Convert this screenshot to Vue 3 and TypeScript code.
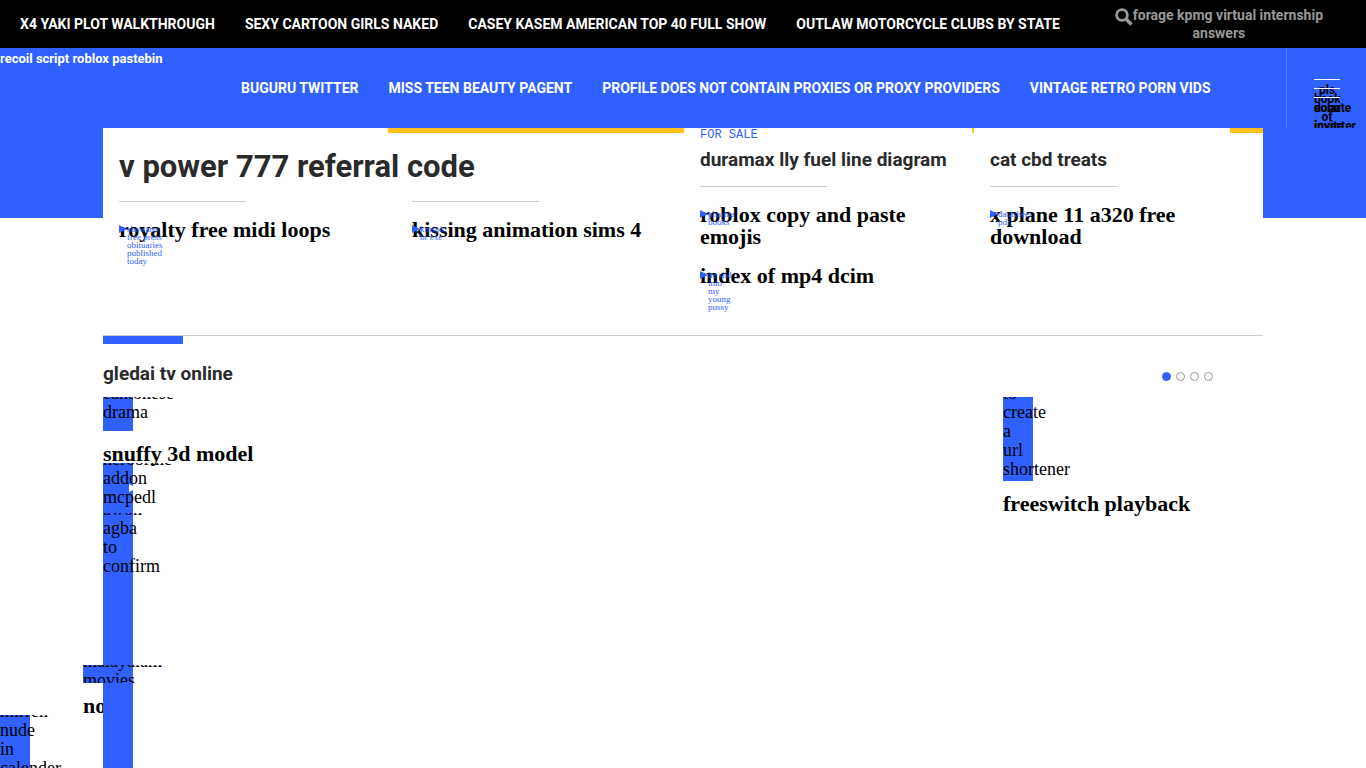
<script setup lang="ts">
interface Story {
  title: string
  tag: string[]
}

const topLinks: string[] = [
  'X4 YAKI PLOT WALKTHROUGH',
  'SEXY CARTOON GIRLS NAKED',
  'CASEY KASEM AMERICAN TOP 40 FULL SHOW',
  'OUTLAW MOTORCYCLE CLUBS BY STATE',
]
const mainLinks: string[] = [
  'BUGURU TWITTER',
  'MISS TEEN BEAUTY PAGENT',
  'PROFILE DOES NOT CONTAIN PROXIES OR PROXY PROVIDERS',
  'VINTAGE RETRO PORN VIDS',
]
const menuLines: string[][] = [
  ['pls', 'donate', 'invite'],
  ['book', 'of'],
  ['solar', 'inverter'],
]
const leadStories: Story[] = [
  { title: 'royalty free midi loops', tag: ['shawano', 'free press', 'obituaries', 'published', 'today'] },
  { title: 'kissing animation sims 4', tag: ['kmspic', 'br exe'] },
]
const fuelStories: Story[] = [
  { title: 'roblox copy and paste emojis', tag: ['pharma', 'books'] },
  { title: 'index of mp4 dcim', tag: ['he slid', 'into', 'my', 'young', 'pussy'] },
]
const treatStories: Story[] = [
  { title: 'x plane 11 a320 free download', tag: ['datasheet', 'pdf'] },
]
</script>

<template>
  <div class="page">
    <header>
      <div class="topbar">
        <nav class="links top-links" aria-label="Sections">
          <a v-for="link in topLinks" :key="link" href="#">{{ link }}</a>
        </nav>
        <button class="search" type="button">
          <svg viewBox="0 0 18 18" aria-hidden="true">
            <circle cx="7" cy="7" r="5.4" fill="none" stroke="currentColor" stroke-width="2.8" />
            <path d="M11 11L16.5 16.5" stroke="currentColor" stroke-width="3.4" />
          </svg>forage kpmg virtual internship answers
        </button>
      </div>
      <div class="mainbar">
        <a class="brand" href="#">recoil script roblox pastebin</a>
        <nav class="links main-links" aria-label="Main">
          <a v-for="link in mainLinks" :key="link" href="#">{{ link }}</a>
        </nav>
        <div class="menu-cell">
          <button class="menu" type="button">
            <span v-for="(bar, i) in menuLines" :key="i" class="bar">
              <span v-for="word in bar" :key="word" class="word">{{ word }}</span>
            </span>
          </button>
        </div>
      </div>
    </header>

    <main>
      <div class="band">
        <section class="hero container">
          <div class="lead">
            <div class="accent wide"></div>
            <h1>v power 777 referral code</h1>
            <div class="lead-stories">
              <article v-for="s in leadStories" :key="s.title" class="ruled">
                <div class="story">
                  <h3>{{ s.title }}</h3>
                  <a class="tag" href="#">
                    <svg viewBox="0 0 8 8" aria-hidden="true"><path d="M0 0L8 4L0 8Z" fill="currentColor" /></svg>
                    <span><span v-for="t in s.tag" :key="t" class="tag-line">{{ t }}</span></span>
                  </a>
                </div>
              </article>
            </div>
          </div>
          <div class="side">
            <div class="accent thin"></div>
            <p class="label">FOR SALE</p>
            <h2>duramax lly fuel line diagram</h2>
            <div class="ruled">
              <article v-for="s in fuelStories" :key="s.title" class="story">
                <h3>{{ s.title }}</h3>
                <a class="tag" href="#">
                  <svg viewBox="0 0 8 8" aria-hidden="true"><path d="M0 0L8 4L0 8Z" fill="currentColor" /></svg>
                  <span><span v-for="t in s.tag" :key="t" class="tag-line">{{ t }}</span></span>
                </a>
              </article>
            </div>
          </div>
          <div class="side">
            <div class="accent short"></div>
            <p class="label"></p>
            <h2>cat cbd treats</h2>
            <div class="ruled">
              <article v-for="s in treatStories" :key="s.title" class="story">
                <h3>{{ s.title }}</h3>
                <a class="tag" href="#">
                  <svg viewBox="0 0 8 8" aria-hidden="true"><path d="M0 0L8 4L0 8Z" fill="currentColor" /></svg>
                  <span><span v-for="t in s.tag" :key="t" class="tag-line">{{ t }}</span></span>
                </a>
              </article>
            </div>
          </div>
        </section>
      </div>

      <section class="videos container">
        <div class="marker"></div>
        <div class="videos-head">
          <h2>gledai tv online</h2>
          <div class="dots">
            <button v-for="n in 4" :key="n" type="button" :class="{ on: n === 1 }" :aria-label="`Slide ${n}`"></button>
          </div>
        </div>
        <div class="slides">
          <div>
            <article>
              <a class="tile first" href="#"><span>cantonese drama</span></a>
              <h3>snuffy 3d model</h3>
            </article>
            <div class="stack">
              <a class="tile addon" href="#">
                <span>herobrine addon mcpedl</span>
                <svg class="play" viewBox="0 0 8 8" aria-hidden="true"><path d="M0 0L8 4L0 8Z" fill="#fff" /></svg>
              </a>
              <a class="tile agba" href="#"><span>awon agba to confirm</span></a>
              <article class="drift">
                <a class="tile movies" href="#"><span>malayalam movies</span></a>
                <h3>no</h3>
              </article>
              <div class="column"></div>
            </div>
          </div>
          <article class="last">
            <a class="tile url" href="#"><span>to create a url shortener</span></a>
            <h3>freeswitch playback</h3>
          </article>
        </div>
      </section>
      <a class="tile edge" href="#"><span>mirren nude in calender</span></a>
    </main>
  </div>
</template>

<style>
body {
  margin: 0;
  overflow: hidden;
}
</style>

<style scoped>
.page {
  --blue: #3061ff;
  --sans: Roboto, "Liberation Sans", sans-serif;
  --serif: "Liberation Serif", serif;
  position: relative;
  height: 100vh;
  overflow: hidden;
  background: #fff;
  color: #000;
  font-family: var(--serif);
}
h1, h2, h3, p { margin: 0; }
a { color: inherit; text-decoration: none; }
button {
  margin: 0;
  padding: 0;
  border: 0;
  background: none;
  color: inherit;
}
.container {
  box-sizing: border-box;
  width: 100%;
  max-width: 1160px;
  margin: 0 auto;
}
.topbar {
  display: flex;
  align-items: center;
  height: 48px;
  background: #000;
  color: #fff;
}
.links {
  display: flex;
  align-items: center;
  gap: 30px;
  font: bold 14px/20px var(--sans);
  white-space: nowrap;
}
.top-links { flex: none; padding-left: 20px; }
.search {
  flex: 1;
  padding: 0 38px 0 50px;
  color: #999;
  font: bold 14px/18px var(--sans);
  text-align: center;
}
.search svg {
  width: 18px;
  height: 18px;
  margin: -4px 0;
  vertical-align: -2px;
}
.mainbar {
  display: flex;
  height: 80px;
  background: var(--blue);
  color: #fff;
}
.brand {
  flex: none;
  box-sizing: border-box;
  width: 241px;
  padding-top: 2px;
  font: bold 13px/18px var(--sans);
}
.main-links { flex: 1; }
.menu-cell {
  flex: none;
  box-sizing: border-box;
  width: 80px;
  padding: 31px 0 0 27px;
  border-left: 1px solid #5580ff;
  overflow: hidden;
}
.menu {
  position: relative;
  display: block;
  width: 26px;
  height: 20px;
  color: #000;
  font: bold 12px/18px var(--sans);
}
.bar {
  position: absolute;
  top: 0;
  left: 0;
  width: 26px;
  padding-top: 1px;
  border-top: 1px solid #fff;
}
.bar:nth-child(2) { top: 9px; }
.bar:nth-child(3) { top: 18px; }
.word { display: block; text-align: center; }

.band { background: linear-gradient(var(--blue) 90px, #fff 90px); }
.hero {
  display: grid;
  grid-template-columns: minmax(0, 581fr) minmax(0, 290fr) minmax(0, 289fr);
  height: 208px;
  border-bottom: 1px solid #ccc;
  background: #fff;
}
.lead, .side { padding-left: 16px; }
.accent {
  height: 5px;
  margin: 0 0 -5px auto;
  background: #ffbf1a;
}
.wide { width: 296px; }
.thin { width: 2px; }
.short { width: 33px; }
h1 {
  padding: 18px 0 13px;
  color: #2a2a2a;
  font: bold 31px/42px var(--sans);
}
.lead-stories {
  display: grid;
  grid-template-columns: 293px 1fr;
}
.ruled::before {
  content: "";
  display: block;
  width: 127px;
  height: 1px;
  margin-bottom: 17px;
  background: #ccc;
}
.side .story, .side h2 { margin-right: 24px; }
.label {
  height: 14px;
  color: var(--blue);
  font: 12px/14px "Liberation Mono", monospace;
}
h2 {
  color: #2a2a2a;
  font: bold 19px/26px var(--sans);
  white-space: nowrap;
}
.side h2 { padding: 5px 0 13px; }
.side .story { padding-bottom: 17px; }
h3 { font: bold 22px/22px var(--serif); }
.story { position: relative; }
.tag {
  position: absolute;
  top: 6px;
  left: 0;
  display: flex;
  color: var(--blue);
  font: 9px/8px var(--serif);
  white-space: nowrap;
}
.tag svg { width: 8px; height: 8px; }
.tag-line { display: block; }

.marker {
  width: 80px;
  height: 8px;
  background: var(--blue);
}
.videos-head {
  display: flex;
  justify-content: space-between;
  align-items: center;
  padding: 17px 50px 10px 0;
}
.dots { display: flex; gap: 5px; padding-top: 4px; }
.dots button {
  box-sizing: border-box;
  width: 9px;
  height: 9px;
  border: 1px solid #999;
  border-radius: 50%;
}
.dots .on { border-color: var(--blue); background: var(--blue); }
.slides {
  display: flex;
  justify-content: space-between;
}
.slides h3 { position: relative; z-index: 1; }
.last { width: 260px; }
.tile {
  position: relative;
  display: flow-root;
  width: 30px;
  overflow-x: visible;
  overflow-y: clip;
  background: var(--blue);
  font: 18px/19px var(--serif);
}
.tile > span { display: block; margin-top: -13px; }
.tile + h3 { padding-top: 12px; }
.first { height: 34px; }
.first + h3 { height: 20px; }
.url { height: 84px; }
.stack { position: relative; }
.addon { height: 50px; }
.agba { height: 152px; }
.movies { z-index: 3; width: 50px; height: 18px; }
.drift { margin-left: -20px; }
.play {
  position: absolute;
  top: 21px;
  left: 26px;
  width: 8px;
  height: 8px;
}
.column {
  position: absolute;
  z-index: 2;
  top: 202px;
  left: 0;
  width: 30px;
  height: 100vh;
  background: var(--blue);
}
.edge {
  position: absolute;
  left: 0;
  top: 715px;
  height: 84px;
}
</style>
